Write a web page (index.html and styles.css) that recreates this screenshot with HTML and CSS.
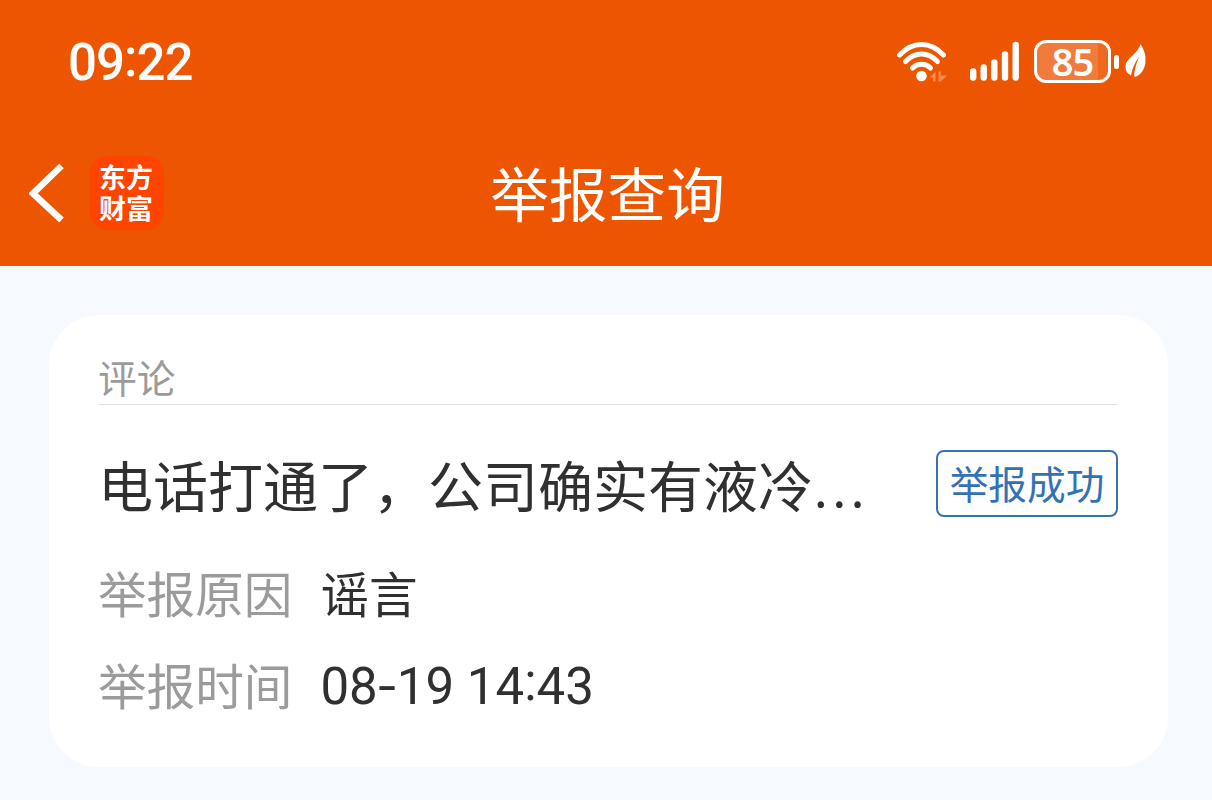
FILE: index.html
```html
<!DOCTYPE html>
<html lang="zh-CN">
<head>
<meta charset="UTF-8">
<meta name="viewport" content="width=device-width, initial-scale=1.0">
<title>举报查询</title>
<link rel="stylesheet" href="styles.css">
</head>
<body>
<header class="header">
  <div class="status-bar">
    <span class="clock">09<span class="colon">:</span>22</span>
    <div class="status-icons">
      <svg class="wifi" width="52" height="44" viewBox="0 0 52 44">
        <g fill="none" stroke="#fff" stroke-width="5" stroke-linecap="round">
          <path d="M3.500 15C16.500 1 34.500 1 47.500 15"/>
          <path d="M9.500 21.500C19 11.500 32 11.500 41.500 21.500"/>
          <path d="M16.500 28C21.500 23 29.500 23 34.500 28"/>
        </g>
        <circle cx="25.500" cy="36" r="5.300" fill="#fff"/>
        <path d="M34 37.500L39.500 31.500V41.500H37V37.500ZM51 35.500L45 41.500H42.500V31.500H45V35.500Z" fill="#f58a50"/>
      </svg>
      <svg class="signal" width="52" height="44" viewBox="0 0 52 44">
        <g stroke="#fff" stroke-width="6.400" stroke-linecap="round">
          <path d="M4.200 31.500V37.500"/>
          <path d="M14.700 27.500V37.500"/>
          <path d="M25.300 22.500V37.500"/>
          <path d="M36 14.500V37.500"/>
          <path d="M46.700 5V37.500"/>
        </g>
      </svg>
      <div class="battery"><span>85</span></div>
      <div class="battery-tip"></div>
      <svg class="leaf" width="22" height="34" viewBox="0 0 22 34">
        <path d="M15.500 0C19 6 21 11 20.500 17C20 26 15 32 9.500 33C8.500 29 11 20 14 13C10 18 7 25 6 31.500C2.500 30 .5 27 .5 23C.5 14 12 11 15.500 0Z" fill="#fff"/>
      </svg>
    </div>
  </div>
  <nav class="nav-bar">
    <div class="nav-left">
      <svg class="back" width="36" height="60" viewBox="0 0 36 60">
        <path d="M32.500 3L4 30.500L32.500 57" fill="none" stroke="#fff" stroke-width="6.500"/>
      </svg>
      <div class="logo">东方财富</div>
    </div>
    <h1>举报查询</h1>
  </nav>
</header>

<main class="card">
  <div class="type">评论</div>
  <div class="title-row">
    <h2>电话打通了，公司确实有液冷<span class="dots">...</span></h2>
    <span class="badge">举报成功</span>
  </div>
  <div class="info-row">
    <span class="label">举报原因</span>
    <span class="value">谣言</span>
  </div>
  <div class="info-row">
    <span class="label">举报时间</span>
    <span class="value date">08<span class="dash">-</span>19 14<span class="colon">:</span>43</span>
  </div>
</main>
</body>
</html>
```
FILE: styles.css
```css
* {
  box-sizing: border-box;
}

body {
  margin: 0;
  height: 800px;
  overflow: hidden;
  background-color: #f6faff;
  font-family: "Noto Sans CJK SC", sans-serif;
  color: #303030;
}

h1, h2 {
  margin: 0;
  font-weight: 400;
}

.header {
  height: 266px;
  background-color: #ed5500;
  color: #fff;
}

.status-bar {
  display: flex;
  justify-content: space-between;
  height: 124px;
  padding: 0 64px 0 68px;
}

.clock {
  font-family: Roboto, sans-serif;
  font-size: 51px;
  font-weight: 500;
  line-height: 126px;
  letter-spacing: -1px;
}

.colon {
  position: relative;
  top: -4px;
}

.status-icons {
  display: flex;
  align-items: center;
  height: 123px;
}

.signal {
  margin: 0 13px 0 21px;
}

.battery {
  display: flex;
  align-items: center;
  justify-content: center;
  width: 77px;
  height: 43px;
  border: 3.5px solid #fff;
  border-radius: 12px;
  background: linear-gradient(to right, #f17a3d 61px, #ef6820 61px);
  font-family: "Noto Sans", sans-serif;
  font-size: 38px;
  font-weight: 600;
  line-height: 36px;
  letter-spacing: -1px;
}

.battery span {
  margin-top: -1px;
}

.battery-tip {
  width: 5px;
  height: 14px;
  margin: 0 6px 0 3px;
  border-radius: 3px;
  background-color: #fff;
}

.leaf {
  margin: -2px 1px 0 0;
}

.nav-bar {
  display: grid;
  grid-template-columns: 1fr auto 1fr;
  align-items: center;
  height: 138px;
  padding: 0 26px 0 29px;
}

.nav-left {
  display: flex;
  align-items: center;
}

.logo {
  width: 74px;
  height: 74px;
  margin-left: 25px;
  padding: 5px 9px 0;
  border-radius: 17px;
  background-color: #ff4400;
  font-size: 27px;
  font-weight: 700;
  line-height: 31px;
  word-break: break-all;
}

h1 {
  margin-top: -3px;
  font-size: 58.7px;
  line-height: 80px;
}

.card {
  width: 1119px;
  height: 452px;
  margin: 49px 0 0 49px;
  padding: 34px 50px 0 49px;
  border-radius: 50px;
  background-color: #fff;
}

.type {
  height: 56px;
  border-bottom: 1px solid #e3e3e3;
  color: #9b9b9b;
  font-size: 38.7px;
  line-height: 55px;
}

.title-row {
  display: flex;
  align-items: center;
  justify-content: space-between;
  height: 157px;
}

h2 {
  margin-top: 1px;
  font-size: 55px;
  line-height: 80px;
  white-space: nowrap;
}

.dots {
  margin-left: 1px;
  font-size: 49px;
  letter-spacing: 4.8px;
}

.badge {
  width: 182px;
  height: 67px;
  border: 2px solid #3a72ae;
  border-radius: 8px;
  color: #3271b8;
  font-size: 38.7px;
  line-height: 61px;
  text-align: center;
}

.info-row {
  display: flex;
  align-items: center;
  gap: 28px;
  height: 92px;
  font-size: 48.6px;
  line-height: 70px;
}

.info-row:nth-child(3) {
  margin-top: -16px;
}

.label {
  color: #9b9b9b;
}

.date {
  margin-top: 6px;
  font-family: Roboto, sans-serif;
  font-size: 51px;
}

.dash {
  display: inline-block;
  margin: 0 3px 0 2px;
  transform: scaleX(1.25);
}
```
